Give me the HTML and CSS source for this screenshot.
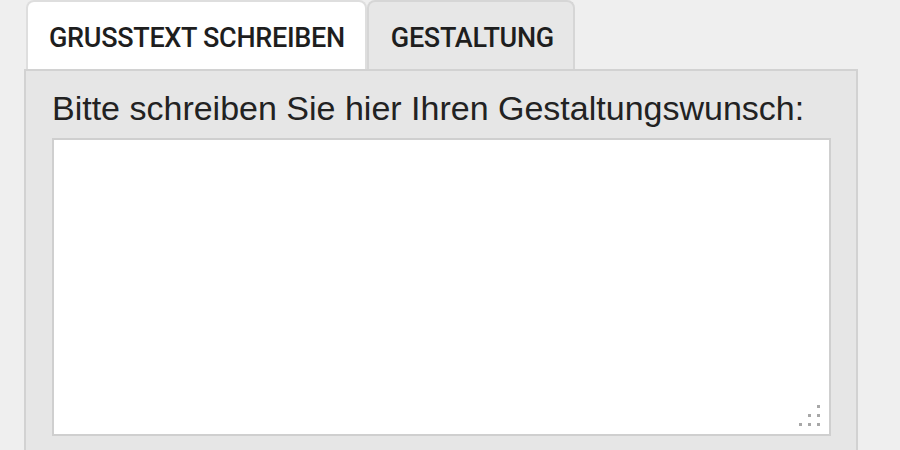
FILE: index.html
```html
<!DOCTYPE html>
<html lang="de">
<head>
<meta charset="utf-8">
<title>Grußtext</title>
<link rel="stylesheet" href="styles.css">
</head>
<body>
<div class="wrap">
  <div class="tabs">
    <div class="tab active">GRUSSTEXT SCHREIBEN</div>
    <div class="tab">GESTALTUNG</div>
  </div>
  <div class="panel">
    <label class="label" for="wish">Bitte schreiben Sie hier Ihren Gestaltungswunsch:</label>
    <div class="field">
      <textarea id="wish" class="textarea"></textarea>
      <span class="grip">
        <i class="d d1"></i><i class="d d2"></i><i class="d d3"></i>
        <i class="d d4"></i><i class="d d5"></i><i class="d d6"></i>
      </span>
    </div>
  </div>
</div>
</body>
</html>
```
FILE: styles.css
```css
html, body {
  margin: 0;
  padding: 0;
  background: #efefef;
  overflow: hidden;
}
.wrap {
  width: 834px;
  margin-left: 24px;
}
.tabs {
  display: flex;
  padding-left: 2px;
  height: 69px;
  box-sizing: border-box;
}
.tab {
  box-sizing: border-box;
  height: 69px;
  border: 2px solid #d6d6d6;
  border-bottom: none;
  border-radius: 8px 8px 0 0;
  background: #e7e7e7;
  display: flex;
  align-items: center;
  padding: 4px 19px 0 22px;
  font-family: Roboto, "Liberation Sans", sans-serif;
  font-weight: 500;
  font-size: 27px;
  color: #1e1e1e;
  letter-spacing: -0.3px;
}
.tab.active {
  background: #ffffff;
  padding-left: 21px;
  padding-right: 20px;
  border-color: #dedede;
}
.panel {
  background: #e6e6e6;
  border: 2px solid #d2d2d2;
  border-bottom: none;
  padding: 17px 24px 0 26px;
  height: 362px;
}
.label {
  display: block;
  font-family: "Liberation Sans", Arial, sans-serif;
  font-size: 34px;
  line-height: 40px;
  color: #222;
}
.field {
  position: relative;
  margin-top: 10px;
  width: 779px;
  height: 298px;
}
.textarea {
  display: block;
  box-sizing: border-box;
  width: 100%;
  height: 100%;
  margin: 0;
  border: 2px solid #cfcfcf;
  background: #fff;
  resize: none;
  outline: none;
}
.grip {
  position: absolute;
  right: 11px;
  bottom: 10px;
  width: 21px;
  height: 21px;
}
.d {
  position: absolute;
  width: 3px;
  height: 3px;
  background: #a8a8a8;
}
.d1 { left: 18px; top: 0; }
.d2 { left: 9px; top: 9px; }
.d3 { left: 18px; top: 9px; }
.d4 { left: 0; top: 18px; }
.d5 { left: 9px; top: 18px; }
.d6 { left: 18px; top: 18px; }
```
